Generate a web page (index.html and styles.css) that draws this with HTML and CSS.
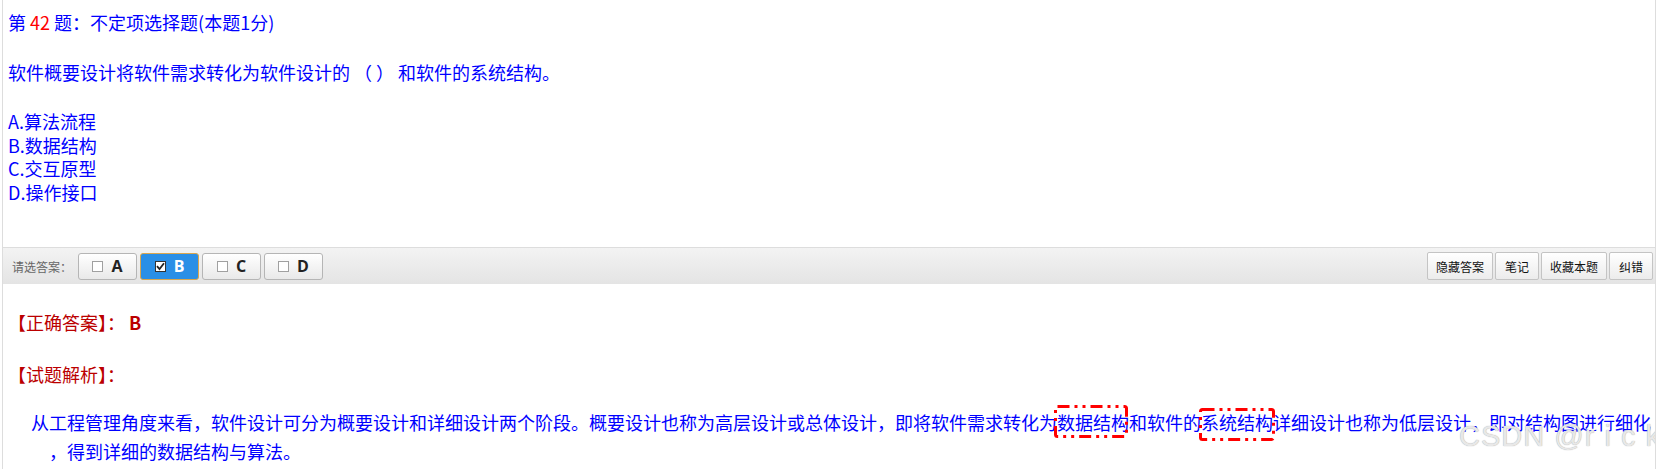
FILE: index.html
```html
<!DOCTYPE html>
<html lang="zh-CN">
<head>
    <meta charset="UTF-8">
    <title>第42题</title>
    <link rel="stylesheet" href="styles.css">
</head>
<body>
    <div class="page">
        <div class="question">
            <p class="title">第 <span class="num">42</span> 题：不定项选择题(本题1分)</p>
            <p class="stem">软件概要设计将软件需求转化为软件设计的 （ ） 和软件的系统结构。</p>
            <div class="options">
                <div>A.算法流程</div>
                <div>B.数据结构</div>
                <div>C.交互原型</div>
                <div>D.操作接口</div>
            </div>
        </div>

        <div class="toolbar">
            <span class="label">请选答案：</span>
            <button class="choice"><span class="box"></span>A</button>
            <button class="choice active"><span class="box">
                <svg width="9" height="9" viewBox="0 0 9 9"><path d="M1 4.2 L3.5 7 L8 1.2" fill="none" stroke="#222" stroke-width="1.8"/></svg>
            </span>B</button>
            <button class="choice"><span class="box"></span>C</button>
            <button class="choice"><span class="box"></span>D</button>
            <div class="tools">
                <button class="tool">隐藏答案</button>
                <button class="tool">笔记</button>
                <button class="tool">收藏本题</button>
                <button class="tool">纠错</button>
            </div>
        </div>

        <div class="answer">
            <p class="right">【正确答案】： <b>B</b></p>
            <p class="head">【试题解析】：</p>
            <p class="explain">从工程管理角度来看，软件设计可分为概要设计和详细设计两个阶段。概要设计也称为高层设计或总体设计，即将软件需求转化为<span class="hl">数据结构<svg class="mark" width="74" height="33"><rect x="1.5" y="1.5" width="71" height="30" rx="2" fill="none" stroke="#f00" stroke-width="3" stroke-dasharray="12 5 3 5 3 5"/></svg></span>和软件的<span class="hl">系统结构<svg class="mark mark2" width="76" height="33"><rect x="1.5" y="1.5" width="73" height="30" rx="2" fill="none" stroke="#f00" stroke-width="3" stroke-dasharray="12 5 3 5 3 5"/></svg></span>详细设计也称为低层设计，即对结构图进行细化<br>，得到详细的数据结构与算法。</p>
        </div>

        <div class="watermark">CSDN @r i c k</div>
    </div>
</body>
</html>
```

FILE: styles.css
```css
body {
    margin: 0;
    font-family: "Noto Sans CJK SC", "Noto Sans", sans-serif;
    background: #fff;
}
.page {
    position: relative;
    margin-left: 2px;
    width: 1652px;
    height: 469px;
    border-left: 1px solid #ddd;
    border-right: 1px solid #ddd;
    overflow: hidden;
}
p {
    margin: 0;
}
.question {
    padding: 10px 5px 0 5px;
    color: #00f;
    font-size: 18px;
    line-height: 24px;
    height: 237px;
}
.num {
    color: #f00;
}
.stem {
    margin-top: 26px;
}
.options {
    margin-top: 26px;
    line-height: 23.7px;
}
.toolbar {
    display: flex;
    align-items: center;
    height: 36px;
    padding: 0 2px 0 9px;
    border-top: 1px solid #ddd;
    background: linear-gradient(#f3f3f3, #e4e4e4);
}
.label {
    font-size: 12px;
    color: #666;
    margin-right: 6px;
}
button {
    font-family: inherit;
    cursor: pointer;
}
.choice {
    display: flex;
    align-items: center;
    justify-content: center;
    gap: 8px;
    width: 59px;
    height: 27px;
    margin-right: 3px;
    padding: 0;
    border: 1px solid #b5b5b5;
    border-radius: 3px;
    background: linear-gradient(#fff, #e9e9e9);
    color: #222;
    font-size: 16px;
    font-weight: bold;
    font-family: "Open Sans", sans-serif;
}
.choice .box {
    display: flex;
    align-items: center;
    justify-content: center;
    width: 11px;
    height: 11px;
    box-sizing: border-box;
    border: 1px solid #a0a0a0;
    background: #fff;
}
.choice.active {
    background: #2a8fe6;
    border-color: #d9a64e;
    color: #fff;
}
.choice.active .box {
    border-color: #333;
}
.tools {
    display: flex;
    gap: 2px;
    margin-left: auto;
}
.tool {
    height: 28px;
    min-width: 44px;
    padding: 0 8px;
    border: 1px solid #c4c4c4;
    border-radius: 2px;
    background: linear-gradient(#fff, #ececec);
    color: #111;
    font-size: 12px;
}
.answer {
    padding: 26px 5px 0 5px;
    font-size: 18px;
    line-height: 24px;
}
.right, .head {
    color: #b00;
}
.head {
    margin-top: 28px;
}
.explain {
    margin-top: 22px;
    padding-left: 41px;
    text-indent: -18px;
    line-height: 29px;
    color: #00f;
    white-space: nowrap;
}
.hl {
    position: relative;
}
.mark {
    position: absolute;
    left: -3px;
    top: 50%;
    margin-top: -17px;
}
.mark2 {
    margin-top: -14px;
    left: -2px;
}
.watermark {
    position: absolute;
    left: 1456px;
    top: 420px;
    font-family: "Liberation Sans", sans-serif;
    font-size: 29px;
    letter-spacing: 1px;
    color: #e8e8e8;
    text-shadow: 0 0 1px #999;
    white-space: nowrap;
}
```
